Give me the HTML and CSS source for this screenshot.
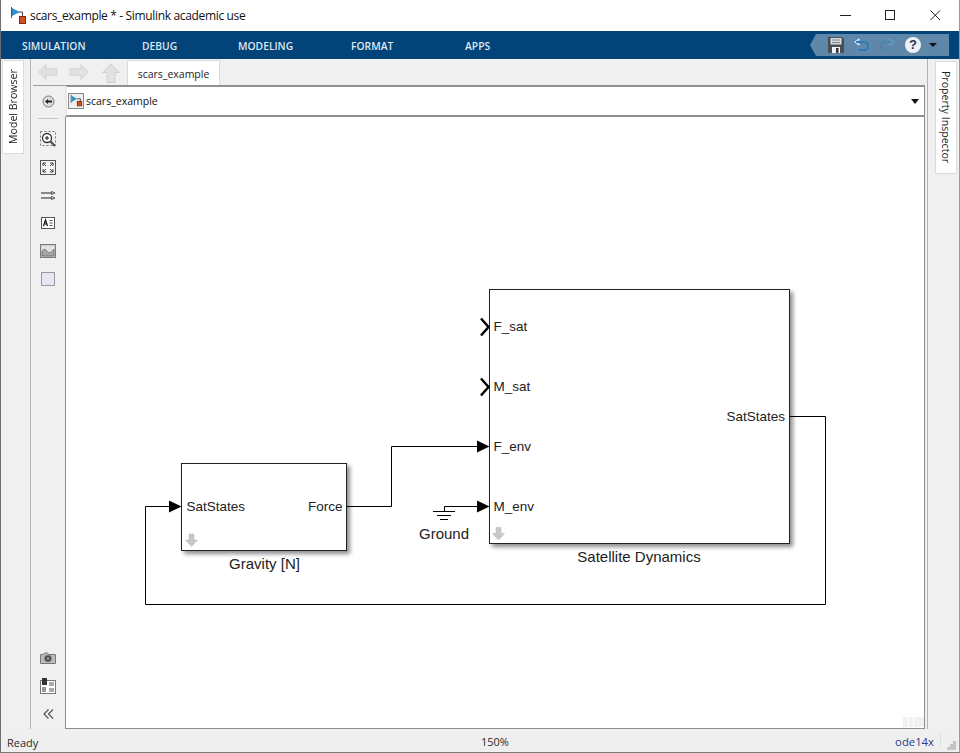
FILE: index.html
```html
<!DOCTYPE html>
<html lang="en">
<head>
<meta charset="utf-8">
<title>scars_example * - Simulink academic use</title>
<link rel="stylesheet" href="styles.css">
</head>
<body>
<div class="window">
  <header class="titlebar">
    <svg class="app-icon" width="20" height="20" viewBox="0 0 20 20">
      <path d="M2.500 1v11" stroke="#555" fill="none"/>
      <path d="M3 2.500l7 3.500-7 3.500z" fill="#2f8fd0" stroke="#1f6aa5" stroke-width=".6"/>
      <path d="M10 6h3.500v4" stroke="#444" fill="none"/>
      <rect x="10.500" y="10.500" width="6" height="7" fill="#d4501f" stroke="#7d2c0e"/>
    </svg>
    <span class="title">scars_example * - Simulink academic use</span>
    <div class="winbtns">
      <svg width="12" height="12" viewBox="0 0 12 12"><path d="M0 6.500h11" stroke="#222"/></svg>
      <svg width="12" height="12" viewBox="0 0 12 12"><rect x=".5" y="1.500" width="9" height="9" fill="none" stroke="#222"/></svg>
      <svg width="12" height="12" viewBox="0 0 12 12"><path d="M.5 1.500l9.500 9.500M10 1.500L.5 11" stroke="#222" fill="none"/></svg>
    </div>
  </header>

  <nav class="ribbon">
    <span class="rtab t1">SIMULATION</span>
    <span class="rtab t2">DEBUG</span>
    <span class="rtab t3">MODELING</span>
    <span class="rtab t4">FORMAT</span>
    <span class="rtab t5">APPS</span>
    <div class="quick">
      <svg width="16" height="16" viewBox="0 0 16 16"><path d="M0 0h14l2 2v14H0z" fill="#4a4f55"/><rect x="2.500" y="1" width="11" height="6.500" fill="#d8dde2"/><path d="M4 3h8M4 5.500h8" stroke="#7c838a"/><rect x="4" y="10" width="8" height="6" fill="#f2f2f2"/><rect x="8" y="11" width="2.500" height="5" fill="#333"/></svg>
      <svg class="q-undo" width="16" height="14" viewBox="0 0 16 14"><path d="M5.500 1L1.500 4l4 3" fill="none" stroke="#cfe6f6" stroke-width="1.800"/><path d="M2 4h8c5.500 0 5.500 8 0 8H5" fill="none" stroke="#2a7cb5" stroke-width="2"/></svg>
      <svg class="q-redo" width="16" height="14" viewBox="0 0 16 14"><path d="M10.500 1l4 3-4 3" fill="none" stroke="#6d9cbc" stroke-width="1.800"/><path d="M14 4H6c-5.500 0-5.500 8 0 8h4" fill="none" stroke="#4d84aa" stroke-width="2"/></svg>
      <span class="help">?</span>
      <span class="caret"></span>
    </div>
  </nav>

  <div class="body">
    <aside class="rail rail-left"><div class="vtab vtab-left">Model Browser</div></aside>

    <div class="center">
      <div class="tabrow">
        <div class="navarrows">
          <svg class="nav-lr" width="20" height="16" viewBox="0 0 20 16"><path d="M8 .5L.8 8 8 15.500V11h11V5H8z" class="ghost"/></svg>
          <svg class="nav-lr" width="20" height="16" viewBox="0 0 20 16"><path d="M12 .5L19.200 8 12 15.500V11H1V5h11z" class="ghost"/></svg>
          <svg class="nav-up" width="18" height="20" viewBox="0 0 18 20"><path d="M.8 9.500L9 .8l8.200 8.700H13v10H5v-10z" class="ghost"/></svg>
        </div>
        <div class="doctab">scars_example</div>
      </div>

      <div class="workspace">
        <div class="tools">
          <div class="tool-top">
            <svg width="13" height="13" viewBox="0 0 13 13"><circle cx="6.500" cy="6.500" r="5.500" fill="#ddd" stroke="#777"/><path d="M3 6.500l3-2.500v1.500h4v2H6V9z" fill="#222"/></svg>
            <span class="tool-sep"></span>
          </div>
          <div class="tool-list">
            <div class="tool"><svg width="16" height="16" viewBox="0 0 16 16"><rect x=".5" y=".5" width="15" height="14" fill="none" stroke="#777" stroke-dasharray="2 2"/><circle cx="7" cy="7" r="4.500" fill="#fff" stroke="#333" stroke-width="1.300"/><path d="M5 7h4M7 5v4" stroke="#111"/><path d="M10.500 10.500l4.500 4.500" stroke="#444" stroke-width="2"/></svg></div>
            <div class="tool"><svg width="16" height="15" viewBox="0 0 16 15"><rect x=".5" y=".5" width="15" height="14" fill="#f4f4f4" stroke="#555"/><path d="M3 3h3M3 3v3M3 3l3 3M13 3h-3M13 3v3M13 3l-3 3M3 12h3M3 12V9M3 12l3-3M13 12h-3M13 12V9M13 12l-3-3" stroke="#444" fill="none"/></svg></div>
            <div class="tool"><svg width="15" height="9" viewBox="0 0 15 9"><path d="M0 2h10M0 7h10" stroke="#222"/><path d="M10.500 .5l3.500 1.500-3.500 1.500zM10.500 5.500l3.500 1.500-3.500 1.500z" fill="#fff" stroke="#555"/></svg></div>
            <div class="tool"><svg width="14" height="12" viewBox="0 0 14 12"><rect x=".5" y=".5" width="13" height="11" fill="#fff" stroke="#555"/><path d="M8.500 3.500h3M8.500 6h3M8.500 8.500h3" stroke="#555"/><path d="M2.500 9L4.500 3l2 6M3.200 7h2.600" stroke="#111" stroke-width="1.200" fill="none"/></svg></div>
            <div class="tool"><svg width="16" height="14" viewBox="0 0 16 14"><rect x=".5" y=".5" width="15" height="13" fill="#e2e2e2" stroke="#7a7a7a" stroke-width="1.300"/><path d="M2 12V8c2-4 3-3 5-1s3 3 7-2v7z" fill="#a8a8a8" stroke="#666" stroke-width=".8"/></svg></div>
            <div class="tool"><svg width="14" height="14" viewBox="0 0 14 14"><rect x=".5" y=".5" width="13" height="13" fill="#e6e6f5" stroke="#9a9a9a"/></svg></div>
          </div>
          <div class="tool-bottom">
            <div class="tool"><svg width="16" height="12" viewBox="0 0 16 12"><path d="M.5 2.500h3l1-1.500h3l1 1.500h7v9H.5z" fill="#bbb" stroke="#777"/><circle cx="8" cy="6.500" r="3.500" fill="#444" stroke="#888"/><circle cx="8" cy="6.500" r="1.300" fill="#aaa"/></svg></div>
            <div class="tool"><svg width="16" height="16" viewBox="0 0 16 16"><rect x=".5" y="2.500" width="15" height="13" fill="#fff" stroke="#777"/><rect x="2" y="9" width="4" height="5" fill="#999"/><rect x="9" y="4" width="5" height="4" fill="#aaa"/><rect x="9" y="10" width="5" height="4" fill="#aaa"/><rect x="2" y="0" width="5" height="7" fill="#333"/></svg></div>
            <div class="tool"><svg width="11" height="10" viewBox="0 0 11 10"><path d="M5.500 .5L1 5l4.500 4.500M10 .5L5.500 5l4.500 4.500" fill="none" stroke="#555" stroke-width="1.200"/></svg></div>
          </div>
        </div>

        <div class="editor">
          <div class="breadcrumb">
            <div class="crumb">
              <span class="crumb-icon">
                <svg width="14" height="14" viewBox="0 0 16 16"><path d="M2.500 1v9" stroke="#555"/><path d="M3 2l6 3.500L3 9z" fill="#2f8fd0"/><path d="M9 5.500h4V9" stroke="#444" fill="none"/><rect x="9.500" y="8.500" width="5" height="5" fill="#d4501f" stroke="#7d2c0e"/></svg>
              </span>
              <span>scars_example</span>
            </div>
            <span class="crumb-caret"></span>
          </div>

          <div class="canvas">
            <svg class="diagram" viewBox="66 117 858 611" width="858" height="611">
              <defs>
                <filter id="shadow" x="-10%" y="-10%" width="120%" height="120%">
                  <feDropShadow dx="3" dy="3" stdDeviation="2" flood-color="#000" flood-opacity=".45"/>
                </filter>
              </defs>

              <rect class="block" x="181.500" y="463.500" width="165" height="87" filter="url(#shadow)"/>
              <rect class="block" x="489.500" y="289.500" width="300" height="254" filter="url(#shadow)"/>

              <path class="wire" d="M825.500 416.500H790M825.500 416.500V604.500H145.500V506.500H170"/>
              <path class="wire" d="M347 506.500H391.500V446.500H478"/>
              <path class="wire" d="M433 511.500H455M437 515.500H451M440 519.500H448M444.500 511.500V506.500H478"/>

              <path class="arrow" d="M169 500.500l12.500 6-12.500 6z"/>
              <path class="arrow" d="M477 440.500l12.500 6-12.500 6z"/>
              <path class="arrow" d="M477 500.500l12.500 6-12.500 6z"/>
              <path class="chevron" d="M481 318.500l7.500 8.500-7.500 8.500"/>
              <path class="chevron" d="M481 378.500l7.500 8.500-7.500 8.500"/>

              <path class="libarrow" d="M189 534h5v6h3.500l-6 6.500-6-6.500h3.500z"/>
              <path class="libarrow" d="M496 527.500h5v6h3.500l-6 6.500-6-6.500h3.500z"/>

              <text class="port" x="186.500" y="511">SatStates</text>
              <text class="port end" x="342.500" y="511">Force</text>
              <text class="port" x="493.500" y="331">F_sat</text>
              <text class="port" x="493.500" y="391">M_sat</text>
              <text class="port" x="493.500" y="451">F_env</text>
              <text class="port" x="493.500" y="511">M_env</text>
              <text class="port end" x="785" y="421">SatStates</text>
              <text class="label mid" x="264.500" y="569">Gravity [N]</text>
              <text class="label mid" x="639" y="562">Satellite Dynamics</text>
              <text class="label mid" x="444" y="539">Ground</text>
            </svg>
            <div class="resize"><i></i><i class="narrow"></i><i class="wide"></i></div>
          </div>
        </div>
      </div>
    </div>

    <aside class="rail rail-right"><div class="vtab vtab-right">Property Inspector</div></aside>
  </div>

  <footer class="status">
    <span class="st-ready">Ready</span>
    <span class="st-zoom">150%</span>
    <span class="st-solver">ode14x</span>
    <span class="st-sep"></span>
    <svg class="grip" width="9" height="9" viewBox="0 0 9 9"><path d="M6 0h3v3H6zM3 3h3v3H3zM6 3h3v3H6zM0 6h3v3H0zM3 6h3v3H3zM6 6h3v3H6z" fill="#c4c4c4"/></svg>
  </footer>
</div>
</body>
</html>
```

FILE: styles.css
```css
* { box-sizing: border-box; }
html, body { margin: 0; padding: 0; background: #f0f0f0; }
body { width: 960px; height: 753px; overflow: hidden; font-family: "Open Sans", "Noto Sans", sans-serif; color: #222; }

.window { width: 960px; height: 753px; display: flex; flex-direction: column; border-left: 1px solid #6f6f6f; border-right: 1px solid #9a9a9a; border-bottom: 1px solid #777; }

.titlebar { height: 31px; flex: none; background: #fff; display: flex; align-items: center; padding-left: 8px; }
.app-icon { flex: none; margin-top: 1px; }
.title { margin-left: 1px; font-size: 12px; letter-spacing: -.34px; color: #111; }
.winbtns { margin-left: auto; margin-top: -1px; display: flex; gap: 33px; padding-right: 17px; align-items: center; }

.ribbon { height: 28px; flex: none; background: #02437a; position: relative; display: flex; align-items: center; }
.rtab { position: absolute; top: 8px; font-size: 10.300px; font-weight: 600; line-height: 14px; color: #dfe8f0; }
.t1 { left: 21px; } .t2 { left: 141px; } .t3 { left: 237px; } .t4 { left: 350px; } .t5 { left: 464px; }
.quick { position: absolute; right: 10px; top: 3px; width: 139px; height: 22px; background: #5f87a9; clip-path: polygon(6px 0, 100% 0, 100% 100%, 6px 100%, 0 50%); display: flex; align-items: center; padding-left: 18px; }
.q-undo { margin-left: 10px; }
.q-redo { margin-left: 9px; }
.help { width: 16px; height: 16px; margin-left: 10px; border-radius: 50%; background: #eef2f6; color: #27344f; font: bold 13px/16px "Liberation Sans", sans-serif; text-align: center; }
.caret { margin-left: 8px; border: 4px solid transparent; border-top: 4px solid #111; border-bottom: 0; }

.body { flex: 1; min-height: 0; display: flex; }
.rail { flex: none; background: #f0f0f0; }
.rail-left { width: 30px; border-right: 1px solid #b4b4b4; padding: 1px 0 0 1px; margin-bottom: 3px; }
.rail-right { width: 32px; border-left: 1px solid #b4b4b4; padding: 2px 0 0 7px; margin-bottom: 3px; }
.vtab { width: 22px; background: #fff; border: 1px solid #dcdcdc; font-size: 10.600px; color: #222; writing-mode: vertical-rl; display: flex; align-items: center; justify-content: center; }
.vtab-left { height: 94px; transform: rotate(180deg); }
.vtab-right { height: 113px; }

.center { flex: 1; min-width: 0; display: flex; flex-direction: column; }
.tabrow { height: 26px; flex: none; display: flex; align-items: flex-end; padding-left: 7px; }
.navarrows { width: 89px; height: 26px; display: flex; align-items: center; flex: none; }
.nav-lr { margin-right: 11px; }
.nav-up { margin-left: 2px; margin-top: 1px; }
.ghost { fill: #e2e2e2; stroke: #d0d0d0; }
.doctab { width: 93px; height: 25px; padding-top: 2px; background: #fff; border: 1px solid #dcdcdc; border-bottom: 0; font-size: 10.500px; text-align: center; line-height: 22px; }

.workspace { flex: 1; min-height: 0; display: flex; }
.tools { width: 32px; flex: none; display: flex; flex-direction: column; align-items: center; padding: 9px 2px 1px 0; border-top: 1px solid #9da0a3; margin-left: 2px; margin-bottom: 3px; }
.tool-top { display: flex; flex-direction: column; align-items: center; }
.tool-sep { width: 20px; height: 1px; background: #c4c4c4; margin-top: 10px; }
.tool-list { display: flex; flex-direction: column; align-items: center; margin-top: 6px; }
.tool { height: 28px; display: flex; align-items: center; justify-content: center; }
.tool-bottom { margin-top: auto; display: flex; flex-direction: column; align-items: center; }

.editor { flex: 1; min-width: 0; display: flex; flex-direction: column; margin: 0 2px 3px 0; }
.breadcrumb { height: 32px; flex: none; background: #fff; border-top: 2px solid #8c9094; border-right: 1px solid #8c9094; border-bottom: 2px solid #8c9094; border-left: 2px solid #e8e8e8; padding: 0 4px 0 1px; display: flex; align-items: center; justify-content: space-between; }
.crumb { display: flex; align-items: center; gap: 2px; font-size: 10.500px; color: #111; }
.crumb-icon { width: 16px; height: 16px; background: #eee; border: 1px solid #888; display: flex; }
.crumb-caret { margin-right: 1px; border: 4.500px solid transparent; border-top: 5px solid #111; border-bottom: 0; }

.canvas { flex: 1; min-height: 0; background: #fff; border-left: 1px solid #8c9094; border-right: 1px solid #8c9094; border-bottom: 1px solid #8c9094; position: relative; overflow: hidden; }
.diagram { display: block; }
.block { fill: #fff; stroke: #222; stroke-width: 1; }
.wire { fill: none; stroke: #000; stroke-width: 1; }
.arrow { fill: #000; }
.chevron { fill: none; stroke: #000; stroke-width: 2.500; }
.libarrow { fill: #c8c8c8; stroke: #b5b5b5; stroke-width: .5; }
.port { font-family: "Liberation Sans", Arial, sans-serif; font-size: 13.500px; fill: #222; }
.label { font-family: "Liberation Sans", Arial, sans-serif; font-size: 15px; fill: #222; }
.end { text-anchor: end; }
.mid { text-anchor: middle; }
.resize { position: absolute; right: 0; bottom: 1px; display: flex; gap: 1px; height: 10px; }
.resize i { width: 5px; background: #f1f1f1; display: block; }
.resize .narrow { width: 4px; }
.resize .wide { width: 10px; }

.status { height: 20px; flex: none; background: #efefef; display: flex; align-items: center; position: relative; font-size: 11px; color: #2a2a2a; }
.st-ready { margin-left: 6px; }
.st-zoom { position: absolute; left: 480px; top: 2px; }
.st-solver { position: absolute; right: 25px; top: 2px; font-size: 11.300px; color: #2b3a8f; }
.st-sep { position: absolute; right: 18px; top: 0; width: 1px; height: 14px; background: #ddd; }
.grip { position: absolute; right: 3px; bottom: 2px; }
```
